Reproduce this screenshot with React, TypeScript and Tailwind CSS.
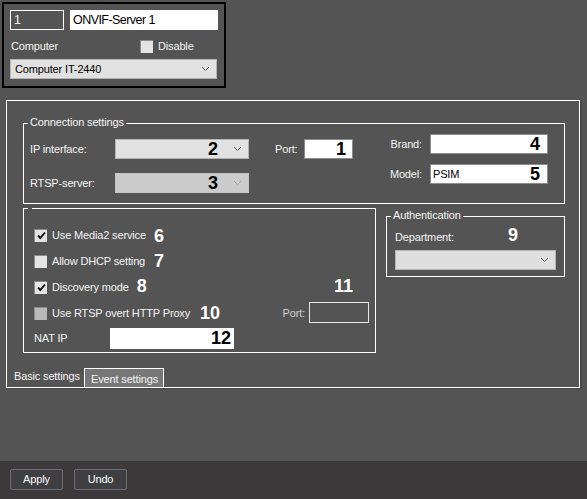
import type { ReactNode } from "react";

const font = "font-['Liberation_Sans',Arial,sans-serif]";

function Chevron({ disabled }: { disabled?: boolean }) {
  return (
    <svg width="9" height="6" viewBox="0 0 9 6" className="shrink-0">
      <polyline
        points="1,1 4.5,4.5 8,1"
        fill="none"
        stroke={disabled ? "#a9a9a9" : "#5c5c5c"}
        strokeWidth="1"
      />
    </svg>
  );
}

function Num({ children, dark }: { children: ReactNode; dark?: boolean }) {
  return (
    <span className={`text-[18px] font-bold leading-none tracking-normal ${dark ? "text-black" : "text-white"}`}>
      {children}
    </span>
  );
}

function Checkbox({ checked, disabled }: { checked?: boolean; disabled?: boolean }) {
  return (
    <span
      className={`w-[13px] h-[13px] shrink-0 flex items-center justify-center border-t border-l ${
        disabled ? "bg-[#b9b9b9] border-[#8e8e8e]" : "bg-[#e4e4e4] border-[#8a8a8a]"
      }`}
    >
      {checked && (
        <svg width="11" height="11" viewBox="0 0 11 11">
          <path d="M2 5.5 L4.3 8 L9 2.5" fill="none" stroke="#111" strokeWidth="1.9" />
        </svg>
      )}
    </span>
  );
}

function GroupBox({
  title,
  className,
  children,
}: {
  title?: string;
  className: string;
  children: ReactNode;
}) {
  return (
    <div className={`relative border border-white ${className}`}>
      {title ? (
        <span className="absolute left-[4px] top-[-8px] px-[2px] leading-[13px] bg-[#545454] whitespace-nowrap">
          {title}
        </span>
      ) : (
        <span className="absolute left-[4px] top-[-1px] w-[4px] h-[1px] bg-[#545454]" />
      )}
      {children}
    </div>
  );
}

export default function App() {
  return (
    <div
      className={`w-[587px] h-[499px] bg-[#545454] flex flex-col text-[11px] tracking-[-0.15px] text-[#f4f4f4] antialiased ${font}`}
    >
      <div className="flex-1 flex flex-col">
        {/* Object card */}
        <div className="ml-[2px] mt-[2px] w-[224px] h-[86px] border-2 border-black pl-[6px] pt-[6px] flex flex-col">
          <div className="flex gap-[6px]">
            <div className="w-[54px] h-[20px] border border-white pl-[3px] flex items-center text-[12.5px] tracking-[-0.5px]">
              1
            </div>
            <div className="w-[148px] h-[20px] bg-white text-black pl-[3px] flex items-center text-[12.5px] tracking-[-0.55px]">
              ONVIF-Server 1
            </div>
          </div>
          <div className="mt-[8px] h-[16px] flex items-center">
            <span className="w-[130px] pl-[1px]">Computer</span>
            <Checkbox />
            <span className="ml-[5px]">Disable</span>
          </div>
          <div className="mt-[5px] w-[207px] h-[20px] bg-[#e1e1e1] border border-[#b4b4b4] text-black flex items-center pl-[4px] pr-[6px]">
            <span className="flex-1">Computer IT-2440</span>
            <Chevron />
          </div>
        </div>

        {/* Settings panel */}
        <div className="ml-[6px] mt-[12px] w-[574px] h-[288px] border border-white flex flex-col shadow-[2px_1px_0_#474747]">
          <GroupBox title="Connection settings" className="ml-[16px] mt-[22px] w-[542px] h-[81px] flex items-start">
            <div className="ml-[6px] mt-[15px] flex flex-col gap-[14px]">
              <div className="flex items-center h-[20px]">
                <span className="w-[85px]">IP interface:</span>
                <div className="w-[134px] h-[20px] bg-[#e1e1e1] border border-[#b4b4b4] flex items-center justify-end pr-[6px] gap-[15px]">
                  <Num dark>2</Num>
                  <Chevron />
                </div>
              </div>
              <div className="flex items-center h-[20px]">
                <span className="w-[85px]">RTSP-server:</span>
                <div className="w-[134px] h-[20px] bg-[#cbcbcb] border border-[#c4c4c4] flex items-center justify-end pr-[6px] gap-[15px]">
                  <Num dark>3</Num>
                  <Chevron disabled />
                </div>
              </div>
            </div>
            <div className="ml-[26px] mt-[15px] h-[20px] flex items-center">
              <span className="w-[29px]">Port:</span>
              <div className="w-[49px] h-[20px] bg-white border border-[#8c8c8c] flex items-center justify-end pr-[6px]">
                <Num dark>1</Num>
              </div>
            </div>
            <div className="ml-[35px] mt-[10px] flex flex-col gap-[10px]">
              <div className="flex items-center h-[20px]">
                <span className="w-[42px] text-right pr-[8px]">Brand:</span>
                <div className="w-[118px] h-[20px] bg-white border border-[#8c8c8c] flex items-center justify-end pr-[7px]">
                  <Num dark>4</Num>
                </div>
              </div>
              <div className="flex items-center h-[20px]">
                <span className="w-[42px] text-right pr-[8px]">Model:</span>
                <div className="w-[118px] h-[20px] bg-white border border-[#8c8c8c] flex items-center pl-[2px] pr-[7px] text-black">
                  <span className="flex-1">PSIM</span>
                  <Num dark>5</Num>
                </div>
              </div>
            </div>
          </GroupBox>

          <div className="ml-[16px] mt-[4px] flex items-start">
            <GroupBox className="w-[353px] h-[145px] pt-[13px] pl-[10px] pr-[6px] flex flex-col">
              <div className="h-[26px] flex items-center">
                <Checkbox checked />
                <span className="ml-[5px]">Use Media2 service</span>
                <span className="ml-[8px] mt-[3px]">
                  <Num>6</Num>
                </span>
              </div>
              <div className="h-[26px] flex items-center">
                <Checkbox />
                <span className="ml-[5px]">Allow DHCP setting</span>
                <span className="ml-[9px] mt-[1px]">
                  <Num>7</Num>
                </span>
              </div>
              <div className="h-[26px] flex items-center">
                <Checkbox checked />
                <span className="ml-[5px]">Discovery mode</span>
                <span className="ml-[8px]">
                  <Num>8</Num>
                </span>
                <span className="ml-auto mr-[16px]">
                  <Num>11</Num>
                </span>
              </div>
              <div className="h-[26px] flex items-center">
                <Checkbox disabled />
                <span className="ml-[5px]">Use RTSP overt HTTP Proxy</span>
                <span className="ml-[10px] mt-[2px]">
                  <Num>10</Num>
                </span>
                <span className="ml-auto text-[#cfcfcf]">Port:</span>
                <div className="ml-[4px] mb-[2px] w-[60px] h-[21px] border border-[#e8e8e8]" />
              </div>
              <div className="h-[24px] flex items-center">
                <span className="w-[76px]">NAT IP</span>
                <div className="w-[124px] h-[21px] bg-white flex items-center justify-end pr-[3px]">
                  <Num dark>12</Num>
                </div>
              </div>
            </GroupBox>

            <GroupBox title="Authentication" className="ml-[10px] mt-[8px] w-[179px] h-[61px] pl-[8px] flex flex-col">
              <div className="mt-[13px] h-[14px] flex items-center">
                <span className="w-[113px]">Department:</span>
                <span className="-mt-[3px]">
                  <Num>9</Num>
                </span>
              </div>
              <div className="mt-[6px] w-[161px] h-[20px] bg-[#dfdfdf] border border-[#b4b4b4] flex items-center justify-end pr-[6px]">
                <Chevron />
              </div>
            </GroupBox>
          </div>

          {/* Tabs */}
          <div className="mt-auto flex items-end pl-[7px]">
            <span className="w-[70px] h-[17px] leading-[13px]">Basic settings</span>
            <div className="w-[80px] h-[19px] border-t border-l border-r border-white bg-[#777777] pl-[6px] flex items-center pt-[2px]">
              Event settings
            </div>
          </div>
        </div>
      </div>

      {/* Bottom bar */}
      <div className="h-[38px] bg-[#3b393a] flex items-start pt-[8px] pl-[10px] gap-[11px]">
        <button className="w-[53px] h-[21px] bg-[#3f3e43] border border-[#6e6e6e] rounded-[2px] text-white flex items-center justify-center">
          Apply
        </button>
        <button className="w-[53px] h-[21px] bg-[#3f3e43] border border-[#6e6e6e] rounded-[2px] text-white flex items-center justify-center">
          Undo
        </button>
      </div>
    </div>
  );
}
